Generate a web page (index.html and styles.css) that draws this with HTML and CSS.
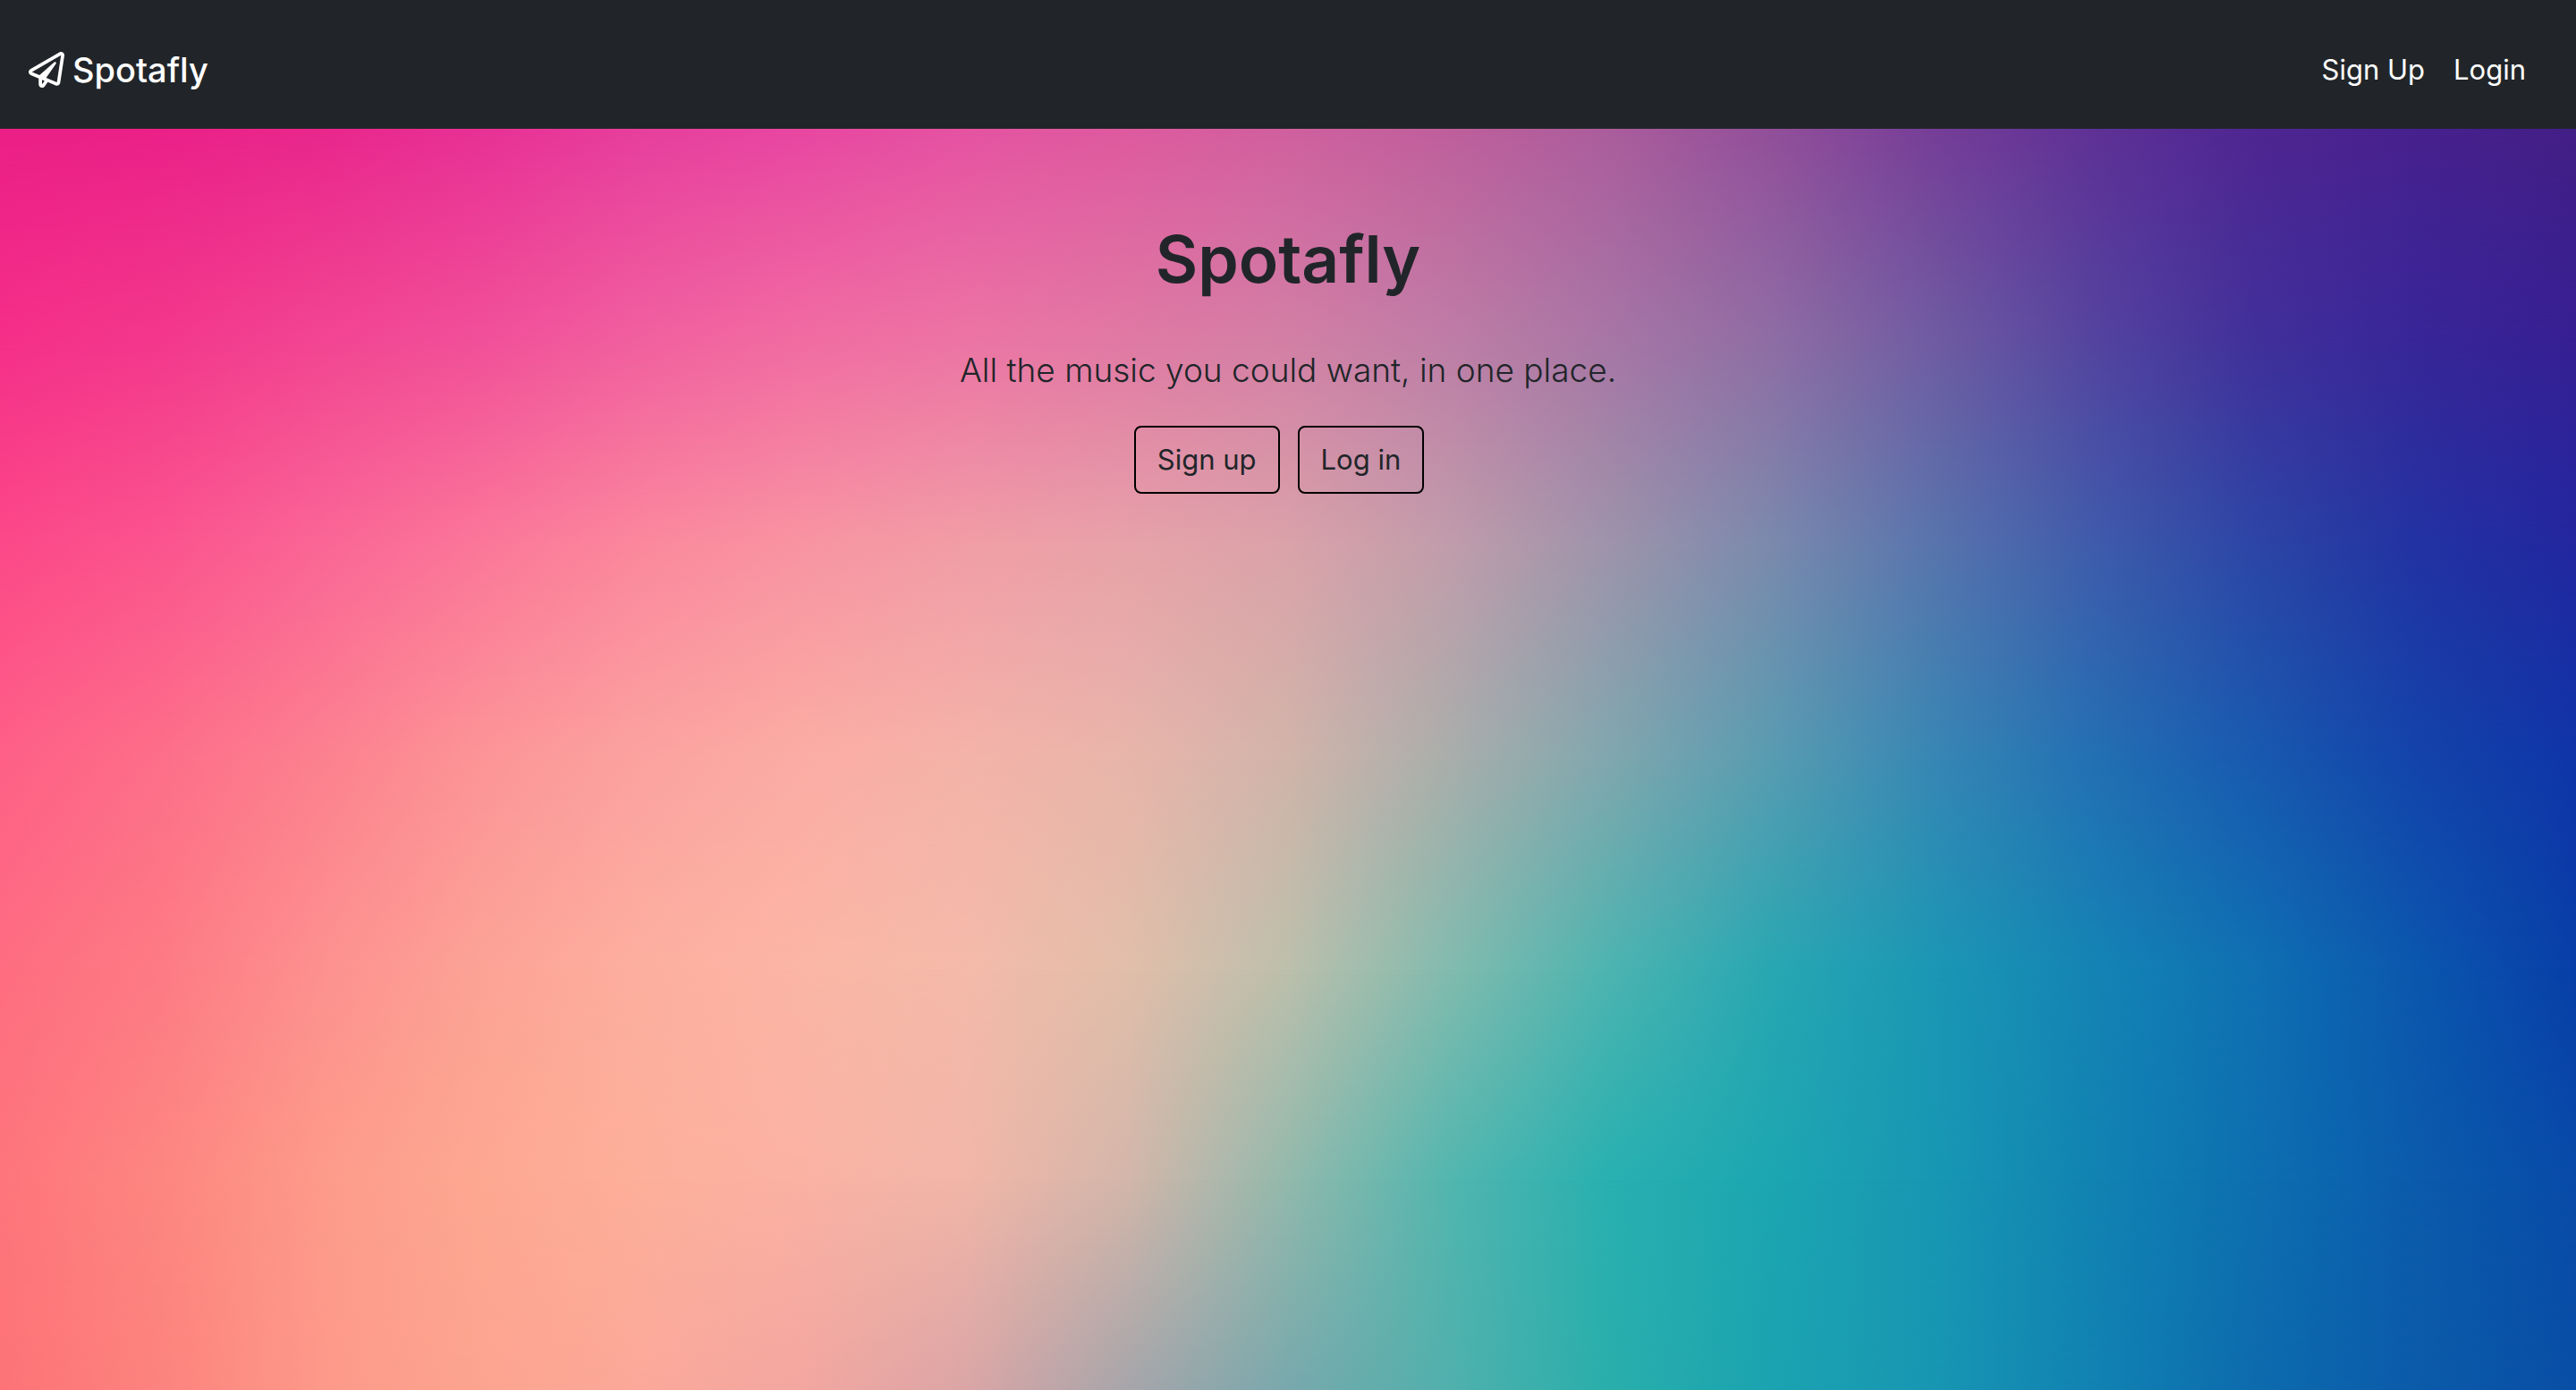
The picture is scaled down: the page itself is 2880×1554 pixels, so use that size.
FILE: index.html
```html
<!DOCTYPE html>
<html lang="en">
<head>
<meta charset="utf-8">
<meta name="viewport" content="width=device-width, initial-scale=1">
<title>Spotafly</title>
<link rel="stylesheet" href="styles.css">
</head>
<body>
<header class="navbar">
  <a class="brand" href="#">
    <svg class="brand-icon" viewBox="0 0 512 512" fill="currentColor" aria-hidden="true">
      <path d="M440 6.5L24 246.4c-34.4 19.9-31.1 70.8 5.7 85.9L144 379.6V464c0 46.4 59.2 65.5 86.6 28.6l43.8-59.1 111.9 46.2c5.9 2.4 12.1 3.600 18.300 3.600 8.200 0 16.300-2.100 23.600-6.200 12.800-7.200 21.600-20 23.900-34.500l59.400-387.200c6.100-40.100-36.900-68.800-71.500-48.900zM192 464v-64.600l36.600 15.100L192 464zm212.600-28.700l-153.800-63.500L391 169.500c10.700-15.500-9.500-33.500-23.700-21.200L155.800 332.600 48 288 464 48l-59.400 387.300z"/>
    </svg>
    <span>Spotafly</span>
  </a>
  <nav class="nav-links">
    <a href="#">Sign Up</a>
    <a href="#">Login</a>
  </nav>
</header>
<main class="hero">
  <div class="mesh" aria-hidden="true">
    <div class="band band-1"></div>
    <div class="band band-2"></div>
    <div class="band band-3"></div>
    <div class="band band-4"></div>
    <div class="band band-5"></div>
    <div class="band band-6"></div>
    <div class="band band-7"></div>
  </div>
  <h1>Spotafly</h1>
  <p class="lead">All the music you could want, in one place.</p>
  <div class="actions">
    <button class="btn" type="button">Sign up</button>
    <button class="btn" type="button">Log in</button>
  </div>
</main>
</body>
</html>
```
FILE: styles.css
```css
* { box-sizing: border-box; }

body {
  margin: 0;
  min-height: 100vh;
  display: flex;
  flex-direction: column;
  font-family: Inter, "Liberation Sans", sans-serif;
  font-size: 31px;
  line-height: 48px;
  color: #212529;
}

a { color: inherit; text-decoration: none; }

.navbar {
  display: flex;
  align-items: center;
  justify-content: space-between;
  padding: 48px 56px 36px 32px;
  background: #212529;
  color: #fff;
}

.brand {
  display: flex;
  align-items: center;
  gap: 9px;
  font-size: 38px;
  line-height: 60px;
  font-weight: 500;
}

.brand-icon { width: 40px; height: 40px; }

.nav-links { display: flex; gap: 32px; }

.hero {
  position: relative;
  isolation: isolate;
  flex: 1;
  display: flex;
  flex-direction: column;
  align-items: center;
  padding-top: 98px;
  overflow: hidden;
}

h1 {
  margin: 0 0 46px;
  font-size: 73px;
  line-height: 96px;
  font-weight: 600;
}

.lead {
  margin: 0 0 32px;
  font-size: 37px;
  line-height: 60px;
  font-weight: 300;
}

.actions { display: flex; }

.btn {
  margin-right: 20px;
  padding: 12px 24px;
  border: 2px solid #000;
  border-radius: 8px;
  background: transparent;
  color: inherit;
  font: inherit;
}

/* Colour mesh: each band fades in over the one above it. */
.mesh, .band { position: absolute; inset: 0; }
.mesh { z-index: -1; }
.band-1 { background: linear-gradient(90deg, #eb1f86, #eb2188, #e9278c, #e83195, #e73f9d, #e847a1, #e553a2, #de5a9f, #d0609f, #bf5f9c, #ab5d9c, #924f9a, #763e98, #5f3196, #4f2692, #47218e, #431f86); }
.band-2 { background: linear-gradient(90deg, #f52f89, #f3388c, #f24592, #f15099, #f1609f, #f16ca2, #ec74a4, #e079a4, #d27fa5, #be7da6, #a776a5, #8f6da4, #705ca2, #54449f, #41309a, #382698, #361f93); mask-image: linear-gradient(transparent 0%, #000 16.667%); }
.band-3 { background: linear-gradient(90deg, #fc4988, #fb558e, #fa6796, #fb7899, #fb899d, #f895a2, #f19ea6, #e7a3a9, #daa3a9, #c09dab, #9d94ab, #7a8aad, #5875ad, #3f5cab, #2c46a6, #2233a2, #2227a0); mask-image: linear-gradient(transparent 16.667%, #000 33.333%); }
.band-4 { background: linear-gradient(90deg, #fe6087, #fd6f89, #fc818f, #fc9597, #fba3a0, #fbada4, #f4b3a9, #e8b5aa, #d1b4aa, #a9aeab, #80a7ae, #589cb1, #3787b4, #2370b3, #185ab0, #1344aa, #0f35a8); mask-image: linear-gradient(transparent 33.333%, #000 50%); }
.band-5 { background: linear-gradient(90deg, #fe6d81, #fd7b84, #fd918f, #fca396, #fdaf9f, #fbb6a5, #f4baa9, #e1beaa, #bcbfac, #82bbae, #4cb4b0, #28a7b2, #1b97b4, #1484b4, #0f70b2, #0b57ae, #083fa8); mask-image: linear-gradient(transparent 50%, #000 66.667%); }
.band-6 { background: linear-gradient(90deg, #fe757b, #fd8681, #fd9b8a, #fda891, #fdaf9b, #fab2a3, #f1b6a8, #d3b6aa, #92b9ac, #52b6af, #28b0b0, #1ca6b1, #1897b3, #1183b2, #0d6fb0, #0b5bac, #084ba8); mask-image: linear-gradient(transparent 66.667%, #000 83.333%); }
.band-7 { background: linear-gradient(90deg, #fd7377, #fc837e, #fd9989, #fca48f, #fba89a, #f2a6a0, #daa5a6, #a6a5aa, #78a8ac, #50b0ac, #29aeab, #1ba3b0, #1896b2, #1182b2, #0d6bad, #0b5ba9, #094ea6); mask-image: linear-gradient(transparent 83.333%, #000 100%); }
```
